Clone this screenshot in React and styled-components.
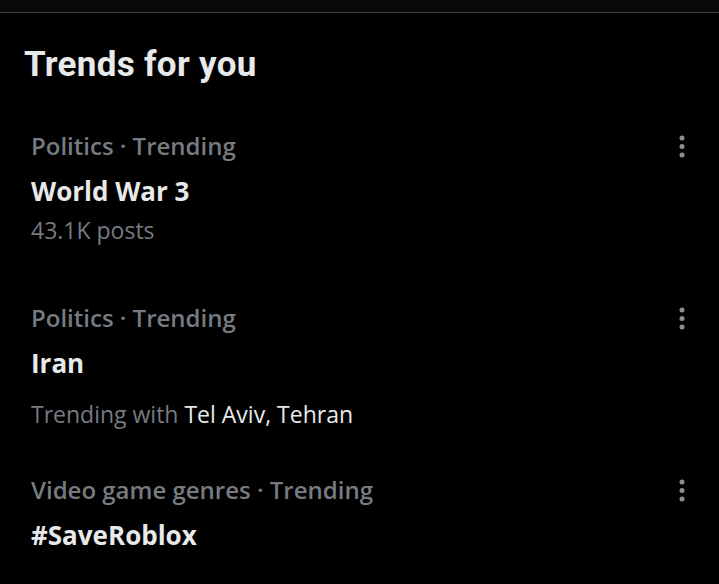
import React from 'react';
import styled, { createGlobalStyle } from 'styled-components';

const GlobalStyle = createGlobalStyle`
  html, body {
    margin: 0;
    padding: 0;
    background: #000;
  }
  body {
    font-family: "Open Sans", "Noto Sans", Arial, sans-serif;
    -webkit-font-smoothing: antialiased;
  }
`;

const trends = [
  {
    id: 1,
    category: 'Politics · Trending',
    title: 'World War 3',
    meta: { text: '43.1K posts' },
  },
  {
    id: 2,
    category: 'Politics · Trending',
    title: 'Iran',
    meta: { prefix: 'Trending with ', text: 'Tel Aviv, Tehran', spaced: true },
  },
  {
    id: 3,
    category: 'Video game genres · Trending',
    title: '#SaveRoblox',
  },
];

const MoreIcon = () => (
  <svg width="24" height="24" viewBox="0 0 24 24" aria-hidden="true">
    <circle cx="12" cy="4" r="2.5" fill="currentColor" />
    <circle cx="12" cy="12.5" r="2.5" fill="currentColor" />
    <circle cx="12" cy="21" r="2.5" fill="currentColor" />
  </svg>
);

export default function App() {
  return (
    <>
      <GlobalStyle />
      <Page>
        <TopStrip />
        <Panel>
          <Heading>Trends for you</Heading>
          <List>
            {trends.map((t) => (
              <TrendRow key={t.id}>
                <TrendText>
                  <Category>{t.category}</Category>
                  <Title>{t.title}</Title>
                  {t.meta && (
                    <Meta $spaced={t.meta.spaced}>
                      {t.meta.prefix}
                      {t.meta.prefix ? <Highlight>{t.meta.text}</Highlight> : t.meta.text}
                    </Meta>
                  )}
                </TrendText>
                <MoreButton>
                  <MoreIcon />
                </MoreButton>
              </TrendRow>
            ))}
          </List>
        </Panel>
      </Page>
    </>
  );
}

const Page = styled.div`
  width: 719px;
  height: 584px;
  overflow: hidden;
  background: #000;
`;

const TopStrip = styled.div`
  height: 12px;
  background: #08090b;
  border-bottom: 1px solid #3d4044;
`;

const Panel = styled.div`
  display: flex;
  flex-direction: column;
`;

const Heading = styled.h2`
  margin: 0;
  padding: 32px 24px 0;
  font-family: Roboto, "Liberation Sans", sans-serif;
  font-weight: 700;
  font-size: 35px;
  line-height: 40px;
  color: #e7e9ea;
  letter-spacing: 0.3px;
`;

const List = styled.div`
  display: flex;
  flex-direction: column;
  padding-top: 46px;
`;

const TrendRow = styled.div`
  display: flex;
  justify-content: space-between;
  align-items: flex-start;
  min-height: 172px;
  padding: 0 25px 0 31px;
`;

const TrendText = styled.div`
  display: flex;
  flex-direction: column;
`;

const Category = styled.div`
  font-size: 24px;
  font-weight: 600;
  line-height: 30px;
  color: #767b81;
`;

const Title = styled.div`
  margin-top: 14px;
  font-size: 26px;
  font-weight: 700;
  line-height: 32px;
  color: #e7e9ea;
`;

const Meta = styled.div`
  margin-top: ${(p) => (p.$spaced ? '20px' : '8px')};
  font-size: 23px;
  font-weight: 400;
  line-height: 30px;
  color: #767b81;
`;

const Highlight = styled.span`
  color: #e7e9ea;
`;

const MoreButton = styled.div`
  display: flex;
  align-items: center;
  justify-content: center;
  width: 24px;
  height: 24px;
  margin-top: 3px;
  color: #8b8f94;
`;
